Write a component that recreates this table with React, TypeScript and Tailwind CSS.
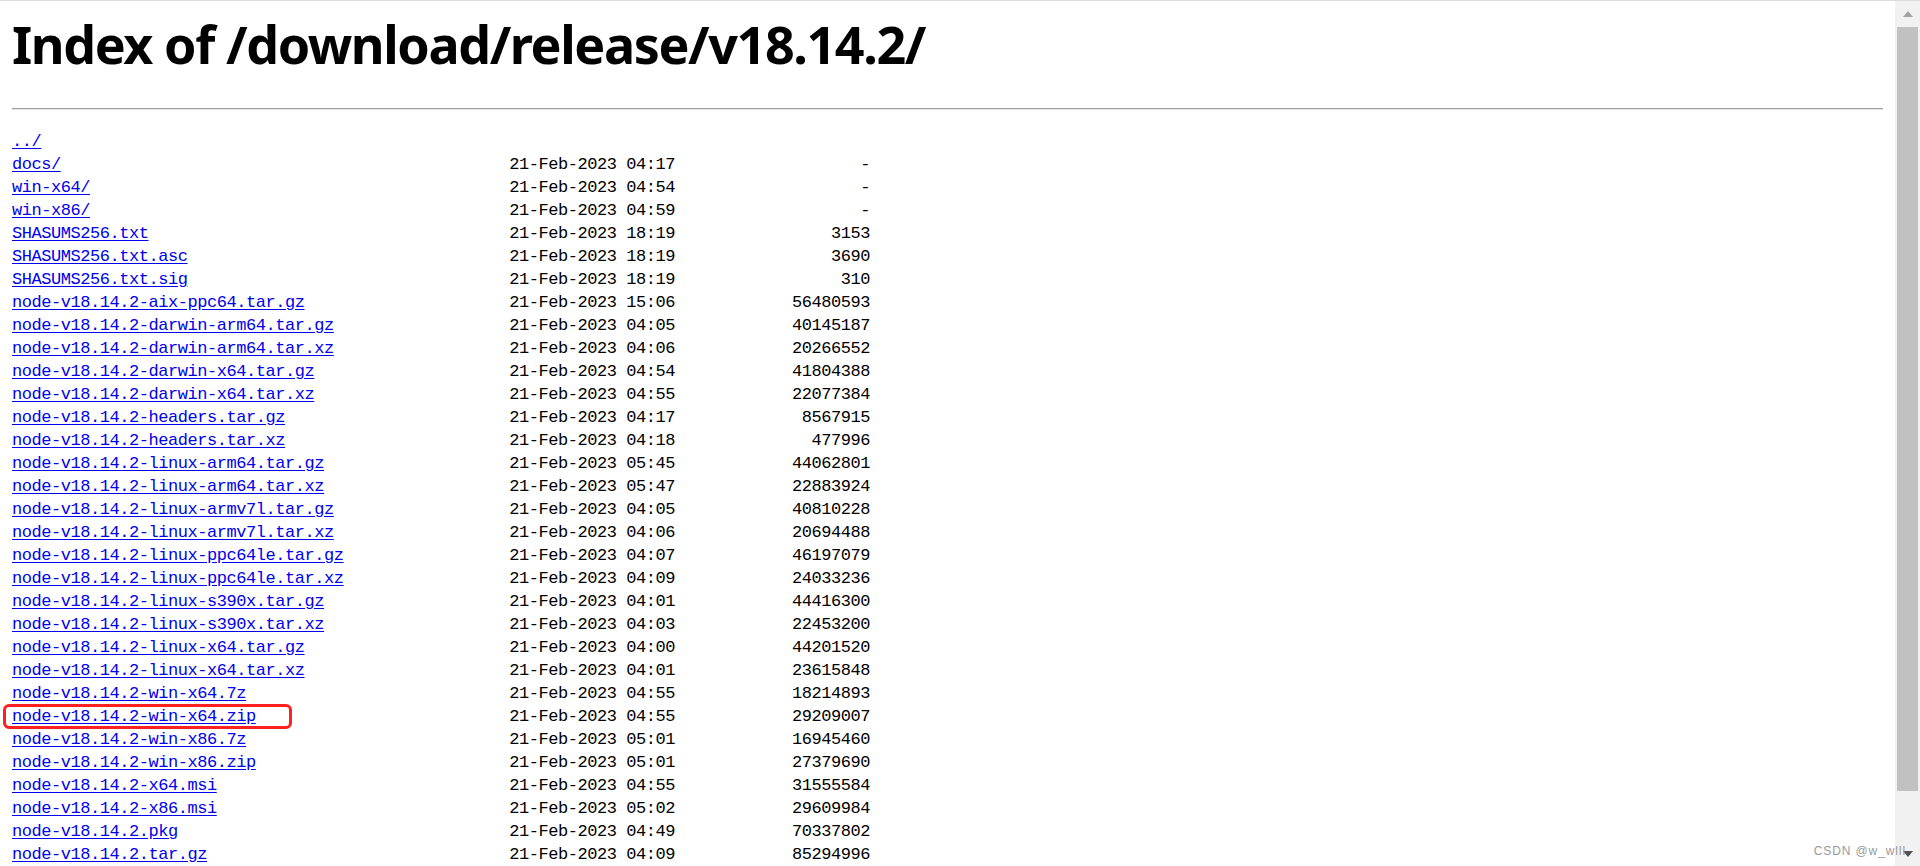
type Entry = { name: string; date?: string; size?: string };

const ENTRIES: Entry[] = [
  { name: "../" },
  { name: "docs/", date: "21-Feb-2023 04:17", size: "-" },
  { name: "win-x64/", date: "21-Feb-2023 04:54", size: "-" },
  { name: "win-x86/", date: "21-Feb-2023 04:59", size: "-" },
  { name: "SHASUMS256.txt", date: "21-Feb-2023 18:19", size: "3153" },
  { name: "SHASUMS256.txt.asc", date: "21-Feb-2023 18:19", size: "3690" },
  { name: "SHASUMS256.txt.sig", date: "21-Feb-2023 18:19", size: "310" },
  { name: "node-v18.14.2-aix-ppc64.tar.gz", date: "21-Feb-2023 15:06", size: "56480593" },
  { name: "node-v18.14.2-darwin-arm64.tar.gz", date: "21-Feb-2023 04:05", size: "40145187" },
  { name: "node-v18.14.2-darwin-arm64.tar.xz", date: "21-Feb-2023 04:06", size: "20266552" },
  { name: "node-v18.14.2-darwin-x64.tar.gz", date: "21-Feb-2023 04:54", size: "41804388" },
  { name: "node-v18.14.2-darwin-x64.tar.xz", date: "21-Feb-2023 04:55", size: "22077384" },
  { name: "node-v18.14.2-headers.tar.gz", date: "21-Feb-2023 04:17", size: "8567915" },
  { name: "node-v18.14.2-headers.tar.xz", date: "21-Feb-2023 04:18", size: "477996" },
  { name: "node-v18.14.2-linux-arm64.tar.gz", date: "21-Feb-2023 05:45", size: "44062801" },
  { name: "node-v18.14.2-linux-arm64.tar.xz", date: "21-Feb-2023 05:47", size: "22883924" },
  { name: "node-v18.14.2-linux-armv7l.tar.gz", date: "21-Feb-2023 04:05", size: "40810228" },
  { name: "node-v18.14.2-linux-armv7l.tar.xz", date: "21-Feb-2023 04:06", size: "20694488" },
  { name: "node-v18.14.2-linux-ppc64le.tar.gz", date: "21-Feb-2023 04:07", size: "46197079" },
  { name: "node-v18.14.2-linux-ppc64le.tar.xz", date: "21-Feb-2023 04:09", size: "24033236" },
  { name: "node-v18.14.2-linux-s390x.tar.gz", date: "21-Feb-2023 04:01", size: "44416300" },
  { name: "node-v18.14.2-linux-s390x.tar.xz", date: "21-Feb-2023 04:03", size: "22453200" },
  { name: "node-v18.14.2-linux-x64.tar.gz", date: "21-Feb-2023 04:00", size: "44201520" },
  { name: "node-v18.14.2-linux-x64.tar.xz", date: "21-Feb-2023 04:01", size: "23615848" },
  { name: "node-v18.14.2-win-x64.7z", date: "21-Feb-2023 04:55", size: "18214893" },
  { name: "node-v18.14.2-win-x64.zip", date: "21-Feb-2023 04:55", size: "29209007" },
  { name: "node-v18.14.2-win-x86.7z", date: "21-Feb-2023 05:01", size: "16945460" },
  { name: "node-v18.14.2-win-x86.zip", date: "21-Feb-2023 05:01", size: "27379690" },
  { name: "node-v18.14.2-x64.msi", date: "21-Feb-2023 04:55", size: "31555584" },
  { name: "node-v18.14.2-x86.msi", date: "21-Feb-2023 05:02", size: "29609984" },
  { name: "node-v18.14.2.pkg", date: "21-Feb-2023 04:49", size: "70337802" },
  { name: "node-v18.14.2.tar.gz", date: "21-Feb-2023 04:09", size: "85294996" },
];

const HIGHLIGHT = "node-v18.14.2-win-x64.zip";

function Row({ entry }: { entry: Entry }) {
  const marked = entry.name === HIGHLIGHT;
  return (
    <div className="relative grid grid-cols-[497.25px_165.75px_195px] h-[23px] items-center whitespace-pre">
      <span>
        <a href="#" className="text-[#0000ee] underline underline-offset-2">
          {entry.name}
        </a>
      </span>
      <span className="text-black">{entry.date ?? ""}</span>
      <span className="text-black text-right">{entry.size ?? ""}</span>
      {marked && (
        <span className="absolute left-[-9px] top-0 w-[289px] h-[25px] border-[3px] border-[#ff2020] rounded-md pointer-events-none" />
      )}
    </div>
  );
}

function Scrollbar() {
  return (
    <div className="w-[25px] flex-shrink-0 bg-[#f1f1f1] flex flex-col items-center">
      <div className="h-[26px] w-full flex items-center justify-center">
        <svg width="10" height="6" viewBox="0 0 10 6">
          <path d="M0 6L5 0L10 6Z" fill="#a3a3a3" />
        </svg>
      </div>
      <div className="w-[21px] h-[764px] bg-[#c1c1c1]" />
      <div className="flex-1 w-full flex items-end justify-center pb-[9px]">
        <svg width="10" height="6" viewBox="0 0 10 6">
          <path d="M0 0L10 0L5 6Z" fill="#505050" />
        </svg>
      </div>
    </div>
  );
}

export default function App() {
  return (
    <div className="relative h-[866px] w-full overflow-hidden bg-white border-t border-[#dcdcdc] flex">
      <main className="flex-1 px-3 min-w-0">
        <h1 className="mt-[18px] h-[50px] leading-[50px] text-[52px] font-bold text-black font-['Noto_Sans',sans-serif] tracking-[-1.4px] whitespace-nowrap">
          Index of /download/release/v18.14.2/
        </h1>
        <div className="mt-[39px] border-t border-[#a0a0a0] border-b border-b-[#e4e4e4]" />
        <div className="mt-[19px] font-['Liberation_Mono',monospace] text-[17px] tracking-[-0.45px]">
          {ENTRIES.map((e) => (
            <Row key={e.name} entry={e} />
          ))}
        </div>
      </main>
      <Scrollbar />
      <span className="absolute right-[14px] bottom-[9px] text-[12px] leading-none tracking-[0.9px] text-[#9a9a9a] font-['Liberation_Sans',sans-serif]">
        CSDN @w_wlll
      </span>
    </div>
  );
}
